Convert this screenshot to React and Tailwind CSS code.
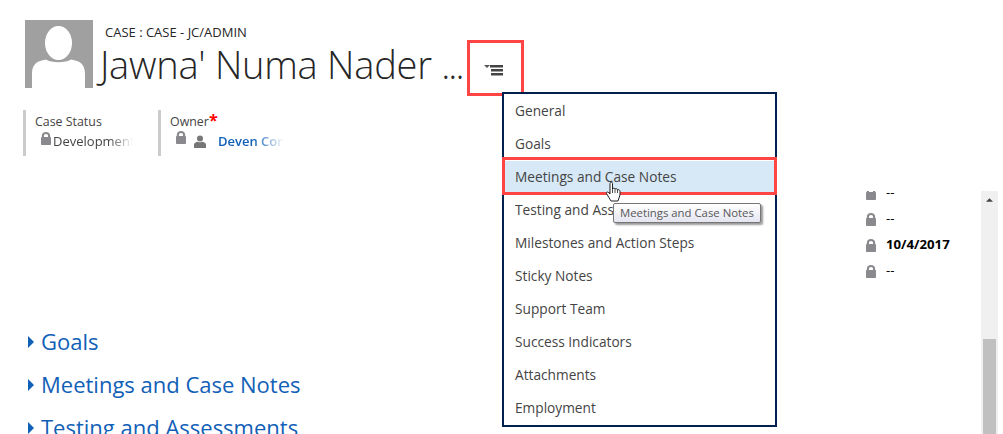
const font = { fontFamily: '"Open Sans","Noto Sans",sans-serif' };

function Lock({ className = "" }) {
  return (
    <svg viewBox="0 0 10 13" className={className} aria-hidden="true">
      <path fillRule="evenodd" d="M1 13C.4 13 0 12.600 0 12V6C0 5.500.3 5.200.8 5.100V4C.8 1.500 2.500 0 5 0s4.200 1.500 4.200 4V5.100C9.700 5.200 10 5.500 10 6V12C10 12.600 9.600 13 9 13zM3 5H7V3.800C7 2.700 6.200 2 5 2S3 2.700 3 3.800z" fill="#8a8a8e" />
    </svg>
  );
}

function Person() {
  return (
    <svg viewBox="0 0 12 13" className="w-3 h-[13px]" aria-hidden="true">
      <circle cx="6" cy="3.400" r="3" fill="#777" />
      <path d="M0 13V9.600C0 8 2 7 3.800 6.800 4.500 7.400 7.500 7.400 8.200 6.800 10 7 12 8 12 9.600V13z" fill="#777" />
    </svg>
  );
}

function Avatar() {
  return (
    <svg viewBox="0 0 68 68" className="w-[68px] h-[68px] shrink-0" aria-hidden="true">
      <rect width="68" height="68" fill="#a0a0a0" />
      <ellipse cx="33.500" cy="23" rx="13.500" ry="17" fill="#fff" />
      <path d="M7 68V54C7 44 12 41 21 39.500C26 43 41 43 46 39.500C55 41 60 44 60 54V68z" fill="#fff" />
    </svg>
  );
}

function MenuIcon() {
  return (
    <svg viewBox="0 0 20 12" className="w-5 h-3" aria-hidden="true">
      <path d="M0 1h6L3 4z" fill="#555" />
      <rect x="6" y="1" width="13" height="2.500" fill="#444" />
      <rect x="7" y="5" width="12" height="2.500" fill="#444" />
      <rect x="7" y="9" width="12" height="2.500" fill="#444" />
    </svg>
  );
}

function Hand() {
  return (
    <svg viewBox="0 0 18 22" className="w-[18px] h-[22px]" aria-hidden="true">
      <path d="M5.500 1.500C6.500.8 7.500 1.300 7.500 2.500V8C8 7 9.500 7 10 8C10.800 7.300 12 7.500 12.500 8.800C13.500 8.300 15 9 15 10.500V14L13 20H6L1.500 12.500C1 11 2.500 10.500 3.500 11.500L5 13V2.500z" fill="#fff" stroke="#222" strokeWidth="1" strokeLinejoin="round" />
      <path d="M7.500 8V12M10 8V12M12.500 8.800V12" stroke="#222" strokeWidth=".8" fill="none" />
    </svg>
  );
}

function Tri() {
  return (
    <svg viewBox="0 0 6 12" className="w-[6px] h-3 shrink-0" aria-hidden="true">
      <path d="M0 0l6 6-6 6z" fill="#1160b7" />
    </svg>
  );
}

const menu = ["General", "Goals", "Meetings and Case Notes", "Testing and Assessments", "Milestones and Action Steps", "Sticky Notes", "Support Team", "Success Indicators", "Attachments", "Employment"];
const sections = ["Goals", "Meetings and Case Notes", "Testing and Assessments"];
const rows = [["--", false], ["--", false], ["10/4/2017", true], ["--", false]];

export default function App() {
  return (
    <div className="relative w-[1003px] h-[434px] overflow-hidden bg-white flex flex-col" style={font}>
      <header className="h-[191px] shrink-0 pt-5 pl-[25px]">
        <div className="flex h-[68px]">
          <Avatar />
          <div className="ml-[7px] min-w-0">
            <div className="ml-[5px] mt-[4px] text-[13px] leading-4 text-[#262626] whitespace-nowrap">CASE : CASE - JC/ADMIN</div>
            <h1 className="mt-[1px] text-[38px] leading-[46px] font-light text-[#262626] whitespace-nowrap tracking-[-0.25px]">Jawna' Numa Nader <span className="tracking-[-2px]">...</span></h1>
          </div>
        </div>
        <div className="flex mt-[22px] -ml-[2px]">
          <div className="w-[135px] h-[46px] border-l-[3px] border-[#cccccc] pl-[9px] pt-[3px]">
            <div className="text-[12.400px] leading-[18px] text-[#444444]">Case Status</div>
            <div className="flex items-start h-5 pl-[6px]">
              <Lock className="w-[10px] h-[13px] mt-[1px] mr-[2px]" />
              <span className="text-[13px] leading-[20px] text-[#444444] w-[80px] whitespace-nowrap [mask-image:linear-gradient(to_right,black_70%,transparent)]">Development</span>
            </div>
          </div>
          <div className="h-[46px] border-l-[3px] border-[#cccccc] pl-[9px] pt-[3px]">
            <div className="text-[12.400px] leading-[18px] text-[#444444]">Owner<span className="absolute text-[#ff0000] text-[16px] leading-[14px] font-bold">*</span></div>
            <div className="flex items-start h-5 pl-[6px]">
              <Lock className="w-[10px] h-[13px]" />
              <span className="ml-[8px] mt-[4px]"><Person /></span>
              <span className="ml-[12px] text-[13px] leading-[20px] font-semibold text-[#1160b7] w-[70px] whitespace-nowrap [mask-image:linear-gradient(to_right,black_50%,transparent_95%)]">Deven Corr</span>
            </div>
          </div>
        </div>
      </header>

      <div className="flex flex-1 min-h-0">
        <main className="flex-1 pl-[28px] pt-[129px] flex flex-col">
          {sections.map((s) => (
            <div key={s} className="flex items-center gap-[7px] h-[43px] shrink-0">
              <Tri />
              <span className="text-[22px] leading-none -mt-[1px] text-[#1160b7] whitespace-nowrap">{s}</span>
            </div>
          ))}
        </main>
        <aside className="w-[115px] -mt-[11px] overflow-hidden [clip-path:inset(11px_0_0_0)]">
          {rows.map(([t, b], i) => (
            <div key={i} className="flex items-center h-[26px]">
              <Lock className="w-[10px] h-[13px]" />
              <span className={"ml-[10px] text-[13.200px] text-black " + (b ? "font-bold" : "")}>{t}</span>
            </div>
          ))}
        </aside>
        <div className="w-[17px] mr-[5px] bg-[#f0f0f0] flex flex-col items-center shrink-0">
          <svg viewBox="0 0 8 4" className="w-[7px] h-[4px] mt-[7px]" aria-hidden="true"><path d="M0 4l4-4 4 4z" fill="#444" /></svg>
          <div className="w-[13px] flex-1 mt-[137px] bg-[#c0c0c0]" />
        </div>
      </div>

      {/* Red highlight round the menu button */}
      <div className="absolute left-[467px] top-[40px] w-[57px] h-[56px] border-[3px] border-[#ff4444] flex items-center justify-center">
        <span className="mt-[4px] -ml-[4px] flex"><MenuIcon /></span>
      </div>

      {/* Dropdown */}
      <div className="absolute left-[502px] top-[92px] w-[275px] h-[335px] border-2 border-[#002050] bg-white flex flex-col pt-[1px]">
        {menu.map((m, i) => (
          <div key={m} className={"h-[33px] shrink-0 flex items-center pl-[11px] text-[13.700px] text-[#444444] whitespace-nowrap " + (i === 2 ? "bg-[#d7e9f7]" : "")}>{m}</div>
        ))}
      </div>
      <div className="absolute left-[502px] top-[157px] w-[275px] h-[38px] border-[3px] border-[#ff4444]" />

      {/* Cursor */}
      <div className="absolute left-[605px] top-[181px]"><Hand /></div>

      {/* Tooltip */}
      <div className="absolute left-[613px] top-[203px] h-[20px] px-[6px] pb-[1px] flex items-center border border-[#767676] rounded-[2px] bg-gradient-to-b from-white to-[#e4e5f0] text-[11.350px] text-[#575757] whitespace-nowrap shadow-[2px_2px_2px_rgba(0,0,0,0.4)]">Meetings and Case Notes</div>
    </div>
  );
}
